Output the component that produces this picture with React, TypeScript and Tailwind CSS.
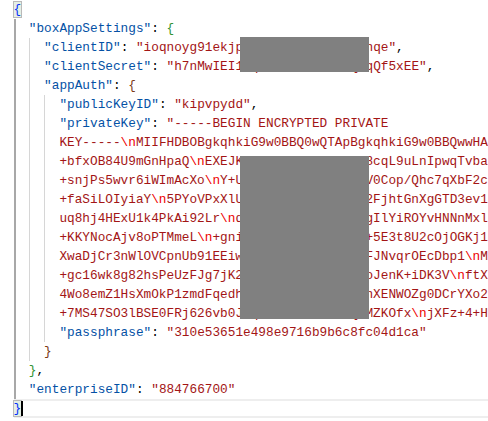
import React from 'react';

const KEY = 'text-[#0451a5]';
const STR = 'text-[#a31515]';
const ESC = 'text-[#ee0000]';
const PUN = 'text-[#000000]';

// hidden under the grey redaction boxes
const FILL = 'Xq7Rk2PwYd3Lx0Qz';

// string body with \n escapes coloured
const Str = ({ v }: { v: string }) => (
    <>
        {v.split(/(\\n)/).map((part, i) =>
            part === '\\n' ? (
                <span key={i} className={ESC}>{part}</span>
            ) : (
                <span key={i} className={STR}>{part}</span>
            )
        )}
    </>
);

const Key = ({ k }: { k: string }) => (
    <>
        <span className={KEY}>"{k}"</span>
        <span className={PUN}>: </span>
    </>
);

const Bracket = ({ c, color }: { c: string; color: string }) => <span className={color}>{c}</span>;

type Line = { depth: number; content: React.ReactNode; current?: boolean };

// visible start / visible end of each wrapped privateKey row
const wrapped = [
    'KEY-----\\nMIIFHDBOBgkqhkiG9w0BBQ0wQTApBgkqhkiG9w0BBQwwHA',
    ...[
        ['+bfxOB84U9mGnHpaQ\\nEXEJK', '8cqL9uLnIpwqTvba'],
        ['+snjPs5wvr6iWImAcXo\\nY+U', 'V0Cop/Qhc7qXbF2c'],
        ['+faSiLOIyiaY\\n5PYoVPxXlU', '2FjhtGnXgGTD3ev1'],
        ['uq8hj4HExU1k4PkAi92Lr\\nd', 'gIlYiROYvHNNnMxl'],
        ['+KKYNocAjv8oPTMmeL\\n+gni', '+5E3t8U2cOjOGKj1'],
        ['XwaDjCr3nWlOVCpnUb91EEiw', 'FJNvqrOEcDbp1\\nM'],
        ['+gc16wk8g82hsPeUzFJg7jK2', 'oJenK+iDK3V\\nftX'],
        ['4Wo8emZ1HsXmOkP1zmdFqedh', 'nXENWOZg0DCrYXo2'],
        ['+7MS47SO3lBSE0FRj626vb0J', 'MZKOfx\\njXFz+4+H'],
    ].map(([a, b]) => a + FILL + b),
];

const lines: Line[] = [
    { depth: 0, content: <span className="border border-[#b9b9b9] bg-[#0064001a] -ml-px"><Bracket c="{" color="text-[#0431fa]" /></span> },
    { depth: 1, content: <><Key k="boxAppSettings" /><Bracket c="{" color="text-[#319331]" /></> },
    { depth: 2, content: <><Key k="clientID" /><Str v={'"ioqnoyg91ekjp' + FILL + 'nqe"'} /><span className={PUN}>,</span></> },
    { depth: 2, content: <><Key k="clientSecret" /><Str v={'"h7nMwIEI1' + FILL + 'qQf5xEE"'} /><span className={PUN}>,</span></> },
    { depth: 2, content: <><Key k="appAuth" /><Bracket c="{" color="text-[#7b3814]" /></> },
    { depth: 3, content: <><Key k="publicKeyID" /><Str v={'"kipvpydd"'} /><span className={PUN}>,</span></> },
    { depth: 3, content: <><Key k="privateKey" /><Str v={'"-----BEGIN ENCRYPTED PRIVATE'} /></> },
    ...wrapped.map((w) => ({ depth: 3, content: <Str v={w} /> })),
    { depth: 3, content: <><Key k="passphrase" /><Str v={'"310e53651e498e9716b9b6c8fc04d1ca"'} /></> },
    { depth: 2, content: <Bracket c="}" color="text-[#7b3814]" /> },
    { depth: 1, content: <><Bracket c="}" color="text-[#319331]" /><span className={PUN}>,</span></> },
    { depth: 1, content: <><Key k="enterpriseID" /><Str v={'"884766700"'} /></> },
    { depth: 0, current: true, content: <span className="border border-[#b9b9b9] bg-[#0064001a] -ml-px"><Bracket c="}" color="text-[#0431fa]" /></span> },
];

export default function App() {
    return (
        <div className="relative w-[488px] h-[421px] overflow-hidden bg-white pl-[13.5px] font-['Liberation_Mono',monospace] text-[12.75px]">
            {lines.map((line, idx) => (
                <div
                    key={idx}
                    className={`flex h-[19px] whitespace-pre ${line.current ? 'border-y-2 border-[#eeeeee] leading-[15px]' : 'leading-[19px]'}`}
                >
                    {Array.from({ length: line.depth }).map((_, g) => (
                        <span
                            key={g}
                            className={`shrink-0 w-[15.3px] h-full ${g === 0 ? 'border-l-2 border-[#a8a8a8]' : 'border-l border-[#d6d6d6]'}`}
                        />
                    ))}
                    <span className="relative">
                        {line.content}
                        {line.current && <span className="absolute left-[7.5px] top-0 w-[2px] h-[15px] bg-black" />}
                    </span>
                </div>
            ))}

            {/* redactions */}
            <div className="absolute left-[240px] top-[37px] w-[129px] h-[35px] bg-[#808080]" />
            <div className="absolute left-[240px] top-[156px] w-[129px] h-[163px] bg-[#808080]" />
        </div>
    );
}
